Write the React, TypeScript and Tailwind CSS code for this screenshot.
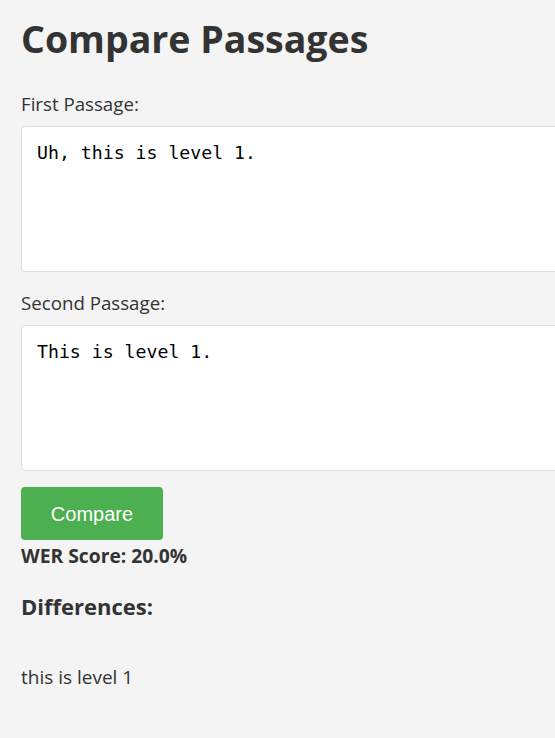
import React from "react";

export default function App() {
  const sans = "font-['Open_Sans',sans-serif]";
  const area =
    "mt-[10px] block h-[146px] w-[700px] resize-none rounded-[4px] border border-[#dddddd] bg-white px-[15px] py-[15px] font-['DejaVu_Sans_Mono',monospace] text-[18.2px] leading-[22px] text-black outline-none";
  return (
    <div className={`min-h-screen w-full overflow-hidden bg-[#f4f4f4] pl-[21px] text-[#333333] ${sans}`}>
      <h1 className="pt-[15px] text-[37.5px] font-bold leading-[48px]">Compare Passages</h1>
      <label className="mt-[28px] block text-[18.7px] leading-[25px]">First Passage:</label>
      <textarea className={area} defaultValue="Uh, this is level 1." />
      <label className="mt-[18px] block text-[18.7px] leading-[25px]">Second Passage:</label>
      <textarea className={area} defaultValue="This is level 1." />
      <button className="mt-[16px] block h-[53px] w-[142px] rounded-[4px] bg-[#4CAF50] font-['Liberation_Sans',Arial,sans-serif] text-[20px] text-white">
        Compare
      </button>
      <div className="mt-[3px] text-[19.3px] font-bold leading-[25px]">WER Score: 20.0%</div>
      <h3 className="mt-[24px] text-[22px] font-bold leading-[29px]">Differences:</h3>
      <div className="mt-[44px] text-[19px] leading-[25px]">this is level 1</div>
    </div>
  );
}
